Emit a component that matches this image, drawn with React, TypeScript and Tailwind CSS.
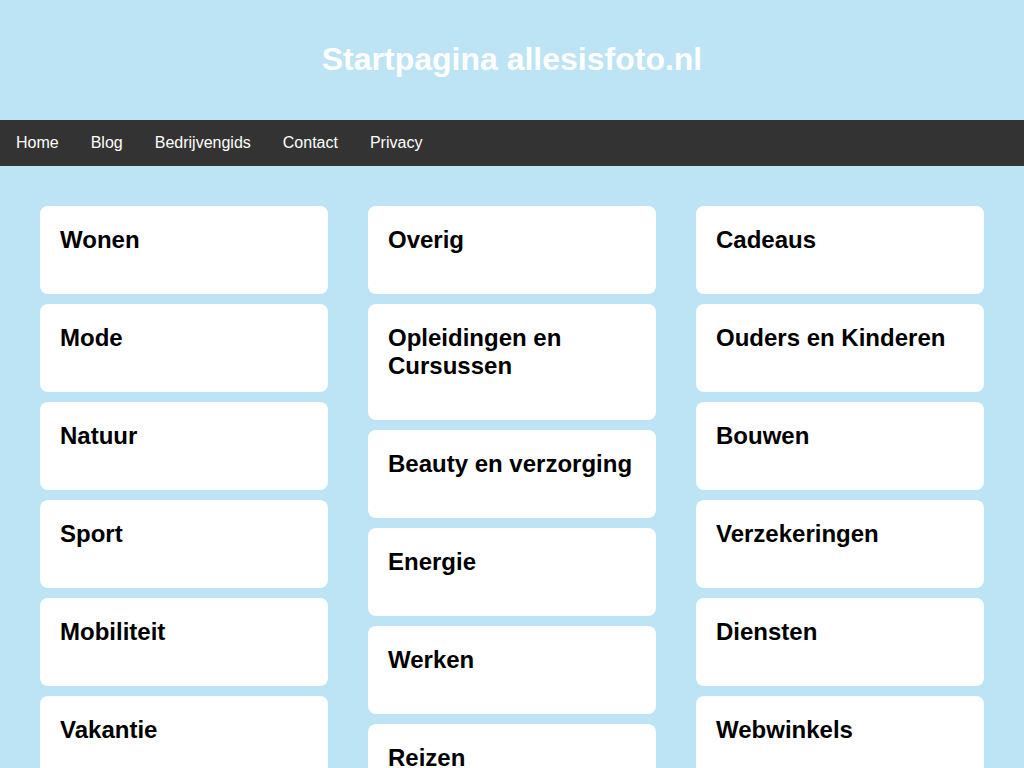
const columns: string[][] = [
  ["Wonen", "Mode", "Natuur", "Sport", "Mobiliteit", "Vakantie"],
  ["Overig", "Opleidingen en Cursussen", "Beauty en verzorging", "Energie", "Werken", "Reizen"],
  ["Cadeaus", "Ouders en Kinderen", "Bouwen", "Verzekeringen", "Diensten", "Webwinkels"],
];

const links = ["Home", "Blog", "Bedrijvengids", "Contact", "Privacy"];

export default function App() {
  return (
    <div className="min-h-screen w-full bg-[#bde4f5] font-['Liberation_Sans',Arial,sans-serif]">
      {/* header */}
      <header className="h-[120px] flex items-center justify-center pb-[2px]">
        <h1 className="text-[32px] font-bold text-white leading-none">Startpagina allesisfoto.nl</h1>
      </header>

      <nav className="bg-[#333333] flex flex-row">
        {links.map((l) => (
          <a key={l} href="#" className="px-4 py-[14px] text-white text-base leading-[18px]">
            {l}
          </a>
        ))}
      </nav>

      <main className="grid grid-cols-3 gap-10 px-10 pt-10 pb-10">
        {columns.map((col, i) => (
          <div key={i} className="flex flex-col gap-2.5">
            {col.map((c) => (
              <div key={c} className="bg-white rounded-lg px-5 pt-5 pb-10">
                <h2 className="text-2xl font-bold text-black leading-[28px]">{c}</h2>
              </div>
            ))}
          </div>
        ))}
      </main>
    </div>
  );
}
